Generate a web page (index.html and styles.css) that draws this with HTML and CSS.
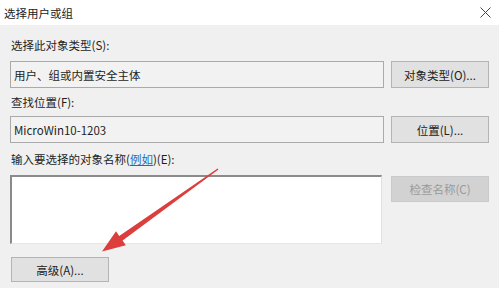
FILE: index.html
```html
<!DOCTYPE html>
<html lang="zh-CN">
<head>
<meta charset="utf-8">
<link rel="stylesheet" href="styles.css">
</head>
<body>
<div class="window">
  <div class="titlebar">
    <span class="title">选择用户或组</span>
    <svg class="close" width="11" height="11" viewBox="0 0 11 11">
      <path d="M0.5 0.5 L10.5 10.5 M10.5 0.5 L0.5 10.5" stroke="#444" stroke-width="1" fill="none"/>
    </svg>
  </div>
  <div class="content">
    <div class="label l1">选择此对象类型(S):</div>
    <div class="row">
      <div class="field">用户、组或内置安全主体</div>
      <div class="btn">对象类型(O)...</div>
    </div>
    <div class="label l2">查找位置(F):</div>
    <div class="row">
      <div class="field">MicroWin10-1203</div>
      <div class="btn">位置(L)...</div>
    </div>
    <div class="label l3">输入要选择的对象名称(<span class="link">例如</span>)(E):</div>
    <div class="row top">
      <div class="textarea"></div>
      <div class="btn disabled">检查名称(C)</div>
    </div>
    <div class="btn adv">高级(A)...</div>
  </div>
  <svg class="arrow" width="503" height="288" viewBox="0 0 503 288">
    <polygon fill="#dc3d3d" points="218.4,169.5 122.6,240.4 125.8,245.2 102,251.5 116.0,231.2 119.2,236.0 217.6,168.5"/>
  </svg>
</div>
</body>
</html>
```
FILE: styles.css
```css
html, body {
  margin: 0;
  padding: 0;
  background: #ffffff;
  width: 503px;
  height: 288px;
  overflow: hidden;
}
.window {
  position: relative;
  width: 503px;
  height: 288px;
  font-family: "Noto Sans CJK SC", "Liberation Sans", sans-serif;
  font-size: 11.5px;
  color: #1e1e1e;
}
.titlebar {
  height: 25px;
  display: flex;
  align-items: center;
  justify-content: space-between;
  background: #ffffff;
}
.title {
  padding-left: 4px;
  color: #222;
}
.close {
  margin-right: 12px;
}
.content {
  width: 489px;
  height: 263px;
  background: #f0f0f0;
  padding-left: 10px;
  box-sizing: content-box;
  display: flex;
  flex-direction: column;
}
.label {
  height: 16px;
  line-height: 16px;
  padding-left: 1px;
}
.l1 { margin-top: 12px; margin-bottom: 8px; }
.l2 { margin-top: 6px; margin-bottom: 6px; }
.l3 { margin-top: 8px; margin-bottom: 8px; }
.row {
  display: flex;
  align-items: stretch;
  gap: 7px;
  height: 27px;
}
.row.top {
  height: 69px;
  align-items: flex-start;
  gap: 9px;
}
.field {
  width: 374px;
  box-sizing: border-box;
  border: 1px solid #aaaaaa;
  background: #f2f2f2;
  padding: 0 3px;
  display: flex;
  align-items: center;
  line-height: 16px;
}
.btn {
  width: 98px;
  box-sizing: border-box;
  border: 1px solid #b4b4b4;
  background: #e1e1e1;
  display: flex;
  align-items: center;
  justify-content: center;
  color: #222;
}
.btn.disabled {
  height: 26px;
  margin-top: 1px;
  background: #d2d2d2;
  border-color: #cacaca;
  color: #9a9a9a;
}
.textarea {
  width: 372px;
  height: 69px;
  box-sizing: border-box;
  background: #ffffff;
  border-left: 2px solid #8a8a8a;
  border-top: 2px solid #8a8a8a;
  border-right: 1px solid #e0e0e0;
  border-bottom: 1px solid #e6e6e6;
}
.btn.adv {
  margin-top: 13px;
  margin-left: 1px;
  height: 25px;
}
.link {
  color: #1a6fc2;
  text-decoration: underline;
}
.arrow {
  position: absolute;
  left: 0;
  top: 0;
  pointer-events: none;
}
```
